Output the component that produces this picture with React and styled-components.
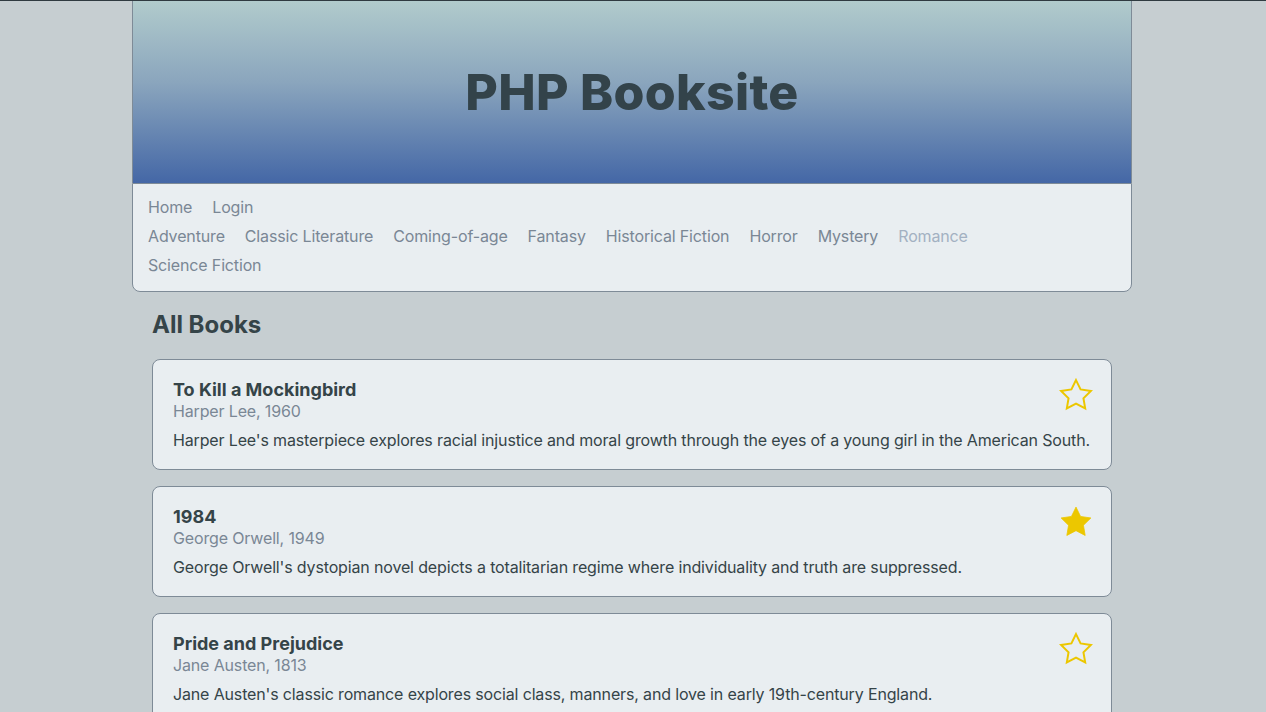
import React from 'react';
import styled, { createGlobalStyle } from 'styled-components';

const GlobalStyle = createGlobalStyle`
  body {
    margin: 0;
    padding-right: 2px;
    border-top: 1px solid #2f3a40;
    background: #c6ced1;
    font-family: Inter, "Noto Sans", "Liberation Sans", sans-serif;
    letter-spacing: -0.15px;
    color: #354448;
  }
`;

const Page = styled.div`
  width: 1000px;
  margin: 0 auto;
`;

const Header = styled.header`
  height: 182px;
  border: 1px solid #7e8b97;
  border-top: none;
  border-bottom: none;
  background: linear-gradient(to bottom, #b1cbcc 0%, #8aa5bd 45%, #4467a6 100%);
  display: flex;
  align-items: center;
  justify-content: center;

  h1 {
    margin: 0;
    font-size: 50px;
    font-weight: 800;
    color: #33434a;
    letter-spacing: 0.3px;
  }
`;

const Nav = styled.nav`
  background: #e9eef1;
  border: 1px solid #7e8b97;
  border-radius: 0 0 8px 8px;
  padding: 9px 15px 11px;
  display: flex;
  flex-direction: column;
`;

const NavRow = styled.div`
  display: flex;
  flex-wrap: wrap;
  max-width: 860px;
  column-gap: 20px;
  row-gap: 0;
`;

const NavLink = styled.a`
  font-size: 16px;
  line-height: 29px;
  color: ${(p) => (p.$active ? '#a3b1c2' : '#7a8795')};
  text-decoration: none;
  cursor: pointer;
`;

const Main = styled.main`
  padding: 19px 20px;
`;

const Heading = styled.h2`
  margin: 0 0 20px;
  font-size: 24px;
  font-weight: 700;
  line-height: 28px;
  color: #354448;
  letter-spacing: 0;
`;

const List = styled.div`
  display: flex;
  flex-direction: column;
  gap: 16px;
`;

const Card = styled.article`
  position: relative;
  background: #e9eef1;
  border: 1px solid #7e8b97;
  border-radius: 8px;
  padding: 19px 20px 19px;
  display: flex;
  flex-direction: column;
`;

const Title = styled.h3`
  margin: 0;
  font-size: 18px;
  font-weight: 700;
  line-height: 22px;
  color: #354448;
  letter-spacing: 0;
`;

const Author = styled.div`
  font-size: 16px;
  line-height: 20px;
  color: #7a8795;
`;

const Desc = styled.p`
  margin: 9px 0 0;
  font-size: 16px;
  line-height: 20px;
  color: #354448;
`;

const StarButton = styled.button`
  position: absolute;
  top: 16px;
  right: 16px;
  border: none;
  background: none;
  padding: 0;
  cursor: pointer;
  display: flex;
`;

function Star({ filled }) {
  return (
    <svg width="38" height="38" viewBox="0 0 24 24">
      <path
        d="M12 2.6l2.9 5.9 6.5.95-4.7 4.6 1.1 6.45L12 17.45 6.2 20.5l1.1-6.45-4.7-4.6 6.5-.95z"
        fill={filled ? '#ecc700' : 'none'}
        stroke="#ecc700"
        strokeWidth={filled ? 0.5 : 1.25}
        strokeLinejoin="miter"
      />
    </svg>
  );
}

const genres = [
  'Adventure',
  'Classic Literature',
  'Coming-of-age',
  'Fantasy',
  'Historical Fiction',
  'Horror',
  'Mystery',
  'Romance',
  'Science Fiction',
];

const books = [
  {
    title: 'To Kill a Mockingbird',
    author: 'Harper Lee, 1960',
    desc: "Harper Lee's masterpiece explores racial injustice and moral growth through the eyes of a young girl in the American South.",
    fav: false,
  },
  {
    title: '1984',
    author: 'George Orwell, 1949',
    desc: "George Orwell's dystopian novel depicts a totalitarian regime where individuality and truth are suppressed.",
    fav: true,
  },
  {
    title: 'Pride and Prejudice',
    author: 'Jane Austen, 1813',
    desc: "Jane Austen's classic romance explores social class, manners, and love in early 19th-century England.",
    fav: false,
  },
];

export default function App() {
  return (
    <>
      <GlobalStyle />
      <Page>
        <Header>
          <h1>PHP Booksite</h1>
        </Header>
        <Nav>
          <NavRow>
            <NavLink>Home</NavLink>
            <NavLink>Login</NavLink>
          </NavRow>
          <NavRow>
            {genres.map((g) => (
              <NavLink key={g} $active={g === 'Romance'}>
                {g}
              </NavLink>
            ))}
          </NavRow>
        </Nav>
        <Main>
          <Heading>All Books</Heading>
          <List>
            {books.map((b) => (
              <Card key={b.title}>
                <Title>{b.title}</Title>
                <Author>{b.author}</Author>
                <Desc>{b.desc}</Desc>
                <StarButton>
                  <Star filled={b.fav} />
                </StarButton>
              </Card>
            ))}
          </List>
        </Main>
      </Page>
    </>
  );
}
